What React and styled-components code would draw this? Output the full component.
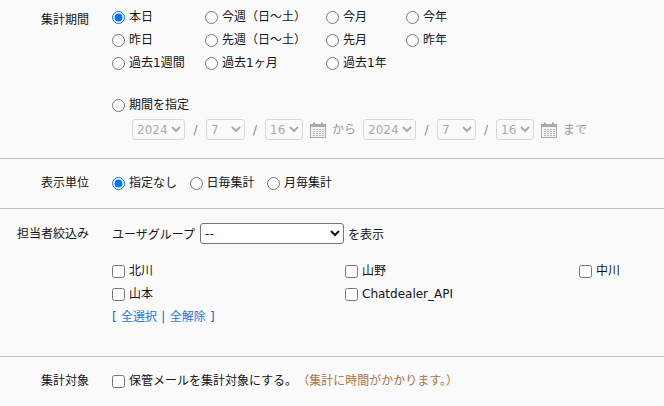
import styled, { createGlobalStyle } from 'styled-components';

const GlobalStyle = createGlobalStyle`
  html, body {
    margin: 0;
    padding: 0;
    background: #fafafa;
    overflow: hidden;
  }
  body {
    font-family: "DejaVu Sans", "Noto Sans CJK JP", sans-serif;
    font-size: 12px;
    color: #151515;
  }
`;

const periodOptions = [
  ['本日', '今週（日～土）', '今月', '今年'],
  ['昨日', '先週（日～土）', '先月', '昨年'],
  ['過去1週間', '過去1ヶ月', '過去1年', null],
];

const CalendarIcon = () => (
  <svg width="16" height="16" viewBox="0 0 16 16" aria-hidden="true">
    <rect x="0.5" y="2.5" width="15" height="13" fill="#f4f4f4" stroke="#aaa" />
    <rect x="1" y="3" width="14" height="2" fill="#aaa" />
    <rect x="3" y="0.5" width="2" height="4" fill="#aaa" />
    <rect x="11" y="0.5" width="2" height="4" fill="#aaa" />
    <path
      d="M3 7.5h2M6 7.5h2M9 7.5h2M12 7.5h2M3 9.5h2M6 9.5h2M9 9.5h2M12 9.5h2M3 11.5h2M6 11.5h2M9 11.5h2M12 11.5h2M3 13.5h2M6 13.5h2M9 13.5h2M12 13.5h2"
      stroke="#b4b4b4"
      strokeWidth="1"
      fill="none"
    />
  </svg>
);

const DateSelect = ({ value, width }) => (
  <DisabledSelect disabled defaultValue={value} $width={width}>
    <option>{value}</option>
  </DisabledSelect>
);

const DateGroup = ({ suffix }) => (
  <>
    <DateSelect value="2024" width={53} />
    <Slash $width={21}>/</Slash>
    <DateSelect value="7" width={39} />
    <Slash $width={20}>/</Slash>
    <DateSelect value="16" width={38} />
    <CalendarSlot>
      <CalendarIcon />
    </CalendarSlot>
    <MutedText>{suffix}</MutedText>
  </>
);

const App = () => (
  <Page>
    <GlobalStyle />
    <PeriodSection>
      <Label $top={3}>集計期間</Label>
      <Content>
        <PeriodGrid>
          {periodOptions.flat().map((text, i) =>
            text ? (
              <Choice key={text}>
                <input type="radio" name="period" defaultChecked={i === 0} />
                <span>{text}</span>
              </Choice>
            ) : (
              <span key={i} />
            )
          )}
        </PeriodGrid>
        <CustomRange>
          <Choice>
            <input type="radio" name="period" />
            <span>期間を指定</span>
          </Choice>
          <DateRow>
            <DateGroup suffix="から" />
            <RangeGap />
            <DateGroup suffix="まで" />
          </DateRow>
        </CustomRange>
      </Content>
    </PeriodSection>

    <UnitSection>
      <Label>表示単位</Label>
      <UnitRow>
        <Choice>
          <input type="radio" name="unit" defaultChecked />
          <span>指定なし</span>
        </Choice>
        <Choice>
          <input type="radio" name="unit" />
          <span>日毎集計</span>
        </Choice>
        <Choice>
          <input type="radio" name="unit" />
          <span>月毎集計</span>
        </Choice>
      </UnitRow>
    </UnitSection>

    <StaffSection>
      <Label $top={2}>担当者絞込み</Label>
      <Content>
        <GroupRow>
          <span>ユーザグループ</span>
          <GroupSelect defaultValue="--">
            <option>--</option>
          </GroupSelect>
          <span>を表示</span>
        </GroupRow>
        <StaffGrid>
          <Choice>
            <input type="checkbox" />
            <span>北川</span>
          </Choice>
          <Choice>
            <input type="checkbox" />
            <span>山野</span>
          </Choice>
          <Choice>
            <input type="checkbox" />
            <span>中川</span>
          </Choice>
          <Choice>
            <input type="checkbox" />
            <span>山本</span>
          </Choice>
          <Choice>
            <input type="checkbox" />
            <span>Chatdealer_API</span>
          </Choice>
        </StaffGrid>
        <Links>
          [ <a href="#all">全選択</a> | <a href="#none">全解除</a> ]
        </Links>
      </Content>
    </StaffSection>

    <TargetSection>
      <Label>集計対象</Label>
      <Choice>
        <input type="checkbox" />
        <span>保管メールを集計対象にする。</span>
        <Note>（集計に時間がかかります。）</Note>
      </Choice>
    </TargetSection>
  </Page>
);

export default App;

const Page = styled.div`
  width: 664px;
  height: 406px;
  overflow: hidden;
  background: #fafafa;
`;

const Section = styled.section`
  display: flex;
  align-items: flex-start;
  border-bottom: 1px solid #bfbfbf;
  box-sizing: border-box;
`;

const PeriodSection = styled(Section)`
  height: 159px;
  padding-top: 8px;
`;

const UnitSection = styled(Section)`
  height: 50px;
  padding-top: 15px;
`;

const StaffSection = styled(Section)`
  height: 148px;
  padding-top: 14px;
`;

const TargetSection = styled(Section)`
  padding-top: 15px;
  border-bottom: 0;
`;

const Label = styled.div`
  width: 89px;
  margin-right: 23px;
  flex: none;
  text-align: right;
  line-height: 18px;
  padding-top: ${(p) => p.$top || 0}px;
`;

const Content = styled.div`
  flex: 1;
  min-width: 0;
`;

const PeriodGrid = styled.div`
  display: grid;
  grid-template-columns: 93px 121px 80px 1fr;
  grid-auto-rows: 23px;
`;

const Choice = styled.label`
  display: flex;
  align-items: center;
  height: 18px;
  line-height: 18px;
  white-space: nowrap;

  input {
    width: 13px;
    height: 13px;
    margin: 0 4px 0 0;
    flex: none;
    accent-color: #0075ff;
  }
`;

const CustomRange = styled.div`
  margin-top: 19px;
`;

const DateRow = styled.div`
  display: flex;
  align-items: center;
  height: 21px;
  margin-top: 5px;
  margin-left: 20px;
  color: #999;
`;

const DisabledSelect = styled.select`
  width: ${(p) => p.$width}px;
  height: 21px;
  box-sizing: border-box;
  font: 12px "DejaVu Sans", sans-serif;
  color: #aaa;
  background: #fafafa;
  border: 1px solid #d9d9d9;
  border-radius: 3px;
  opacity: 1;
`;

const Slash = styled.span`
  width: ${(p) => p.$width}px;
  text-align: center;
  color: #888;
`;

const CalendarSlot = styled.span`
  display: flex;
  margin: 0 6px 0 7px;
`;

const MutedText = styled.span`
  color: #999;
  line-height: 18px;
`;

const RangeGap = styled.span`
  width: 7px;
`;

const UnitRow = styled.div`
  display: flex;
  gap: 12.5px;
`;

const GroupRow = styled.div`
  display: flex;
  align-items: center;
  height: 21px;
`;

const GroupSelect = styled.select`
  width: 144px;
  height: 21px;
  margin: 0 4px 0 5px;
  box-sizing: border-box;
  font: 12px "DejaVu Sans", sans-serif;
  color: #111;
  background: #fff;
  border: 1px solid #767676;
  border-radius: 3px;
`;

const StaffGrid = styled.div`
  display: grid;
  grid-template-columns: 233px 234px 1fr;
  grid-auto-rows: 23px;
  margin-top: 18px;
`;

const Links = styled.div`
  line-height: 18px;
  color: #0f6fc6;
  word-spacing: 0.5px;

  a {
    color: #2a78d6;
    text-decoration: none;
  }
`;

const Note = styled.span`
  color: #ad7440;
`;
